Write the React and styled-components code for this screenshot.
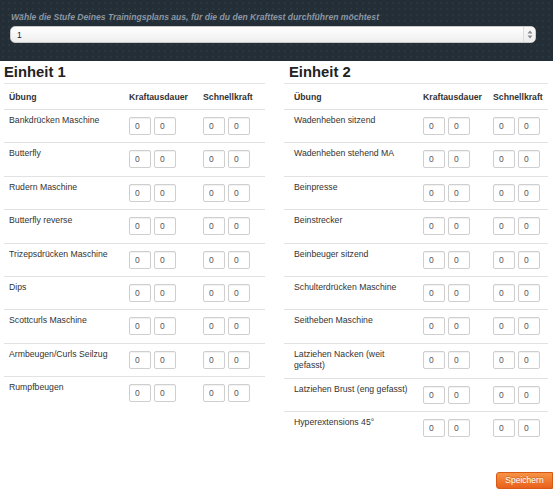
import React from "react";
import styled, { createGlobalStyle } from "styled-components";

const GlobalStyle = createGlobalStyle`
  html, body {
    margin: 0;
    padding: 0;
    background: #fff;
  }
  body {
    font-family: "Liberation Sans", Arial, sans-serif;
    color: #333;
  }
  * {
    box-sizing: border-box;
  }
`;

const unitOne = [
  "Bankdrücken Maschine",
  "Butterfly",
  "Rudern Maschine",
  "Butterfly reverse",
  "Trizepsdrücken Maschine",
  "Dips",
  "Scottcurls Maschine",
  "Armbeugen/Curls Seilzug",
  "Rumpfbeugen",
];

const unitTwo = [
  "Wadenheben sitzend",
  "Wadenheben stehend MA",
  "Beinpresse",
  "Beinstrecker",
  "Beinbeuger sitzend",
  "Schulterdrücken Maschine",
  "Seitheben Maschine",
  "Latziehen Nacken (weit gefasst)",
  "Latziehen Brust (eng gefasst)",
  "Hyperextensions 45°",
];

const SelectArrows = () => (
  <svg width="6" height="9" viewBox="0 0 6 9">
    <path d="M3 0.5 L5.5 3.5 L0.5 3.5 Z" fill="#8a8a8a" />
    <path d="M3 8.5 L5.5 5.5 L0.5 5.5 Z" fill="#8a8a8a" />
  </svg>
);

const Unit = ({ title, exercises, columns, indent, width }) => (
  <Column width={width}>
    <Heading indent={indent - 5}>{title}</Heading>
    <HeadRow columns={columns} indent={indent}>
      <HeadCell>Übung</HeadCell>
      <HeadCell>Kraftausdauer</HeadCell>
      <HeadCell>Schnellkraft</HeadCell>
    </HeadRow>
    {exercises.map((name) => (
      <Row key={name} columns={columns} indent={indent}>
        <NameCell>{name}</NameCell>
        <InputCell>
          <NumInput defaultValue="0" />
          <NumInput defaultValue="0" />
        </InputCell>
        <InputCell>
          <NumInput defaultValue="0" />
          <NumInput defaultValue="0" />
        </InputCell>
      </Row>
    ))}
  </Column>
);

const App = () => {
  return (
    <>
      <GlobalStyle />
      <TopBar>
        <Label>
          Wähle die Stufe Deines Trainingsplans aus, für die du den Krafttest
          durchführen möchtest
        </Label>
        <Select>
          <span>1</span>
          <SelectButton>
            <SelectArrows />
          </SelectButton>
        </Select>
      </TopBar>
      <Main>
        <Unit
          title="Einheit 1"
          exercises={unitOne}
          columns="120px 74px 1fr"
          indent={5}
          width={261}
        />
        <Unit
          title="Einheit 2"
          exercises={unitTwo}
          columns="129px 70px 1fr"
          indent={10}
          width={264}
        />
      </Main>
      <Footer>
        <SaveButton>Speichern</SaveButton>
      </Footer>
    </>
  );
};

export default App;

const TopBar = styled.div`
  height: 61px;
  padding: 12px 17px 0 10px;
  background-color: #232e37;
  background-image: radial-gradient(rgba(255, 255, 255, 0.035) 1px, transparent 1.5px);
  background-size: 6px 6px;
`;

const Label = styled.div`
  font-size: 8.6px;
  line-height: 11px;
  font-weight: bold;
  font-style: italic;
  color: #8b97a3;
  padding-left: 1px;
  white-space: nowrap;
`;

const Select = styled.div`
  margin-top: 3px;
  height: 17px;
  display: flex;
  align-items: center;
  justify-content: space-between;
  border-radius: 5px;
  background: linear-gradient(#ffffff, #eeeeee);
  border: 1px solid #c9c9c9;
  font-size: 8.5px;
  color: #222;
  padding-left: 6px;
  overflow: hidden;
`;

const SelectButton = styled.div`
  width: 12px;
  height: 100%;
  display: flex;
  align-items: center;
  justify-content: center;
  border-left: 1px solid #dcdcdc;
  background: linear-gradient(#fafafa, #ececec);
`;

const Main = styled.div`
  display: flex;
  gap: 19px;
  padding: 0 5px 0 4px;
`;

const Column = styled.div`
  flex: 0 0 ${(p) => p.width}px;
  display: flex;
  flex-direction: column;
`;

const Heading = styled.h2`
  margin: 0;
  padding: 4px 0 3px ${(p) => p.indent}px;
  font-size: 14.8px;
  line-height: 15px;
  font-weight: bold;
  color: #222;
  border-bottom: 1px solid #e4e4e4;
`;

const HeadRow = styled.div`
  display: grid;
  grid-template-columns: ${(p) => p.columns};
  height: 25px;
  align-items: center;
  padding-left: ${(p) => p.indent}px;
`;

const HeadCell = styled.div`
  font-size: 8.7px;
  font-weight: bold;
  color: #333;
  white-space: nowrap;
`;

const Row = styled.div`
  display: grid;
  grid-template-columns: ${(p) => p.columns};
  align-items: start;
  border-top: 1px solid #e2e2e2;
  padding-left: ${(p) => p.indent}px;
`;

const NameCell = styled.div`
  padding: 5px 6px 6px 0;
  font-size: 8.7px;
  line-height: 11.5px;
  color: #333;
`;

const InputCell = styled.div`
  display: flex;
  gap: 3px;
  padding: 7px 0 7.4px;
`;

const NumInput = styled.input`
  width: 22px;
  height: 18px;
  margin: 0;
  padding: 0 0 0 5px;
  border: 1px solid #cfcfcf;
  border-radius: 2px;
  background: #fff;
  box-shadow: inset 0 1px 1px rgba(0, 0, 0, 0.06);
  font-family: "Liberation Sans", Arial, sans-serif;
  font-size: 8.5px;
  color: #555;
  outline: none;
`;

const Footer = styled.div`
  display: flex;
  justify-content: flex-end;
  padding-top: 27px;
`;

const SaveButton = styled.button`
  width: 57px;
  height: 17px;
  margin: 0;
  padding: 0;
  border: 1px solid #d65a16;
  border-radius: 3px 0 0 3px;
  background: linear-gradient(#f79444, #e8601c);
  color: #fff;
  font-family: "Liberation Sans", Arial, sans-serif;
  font-size: 8.5px;
  text-shadow: 0 -1px 0 rgba(0, 0, 0, 0.2);
`;
